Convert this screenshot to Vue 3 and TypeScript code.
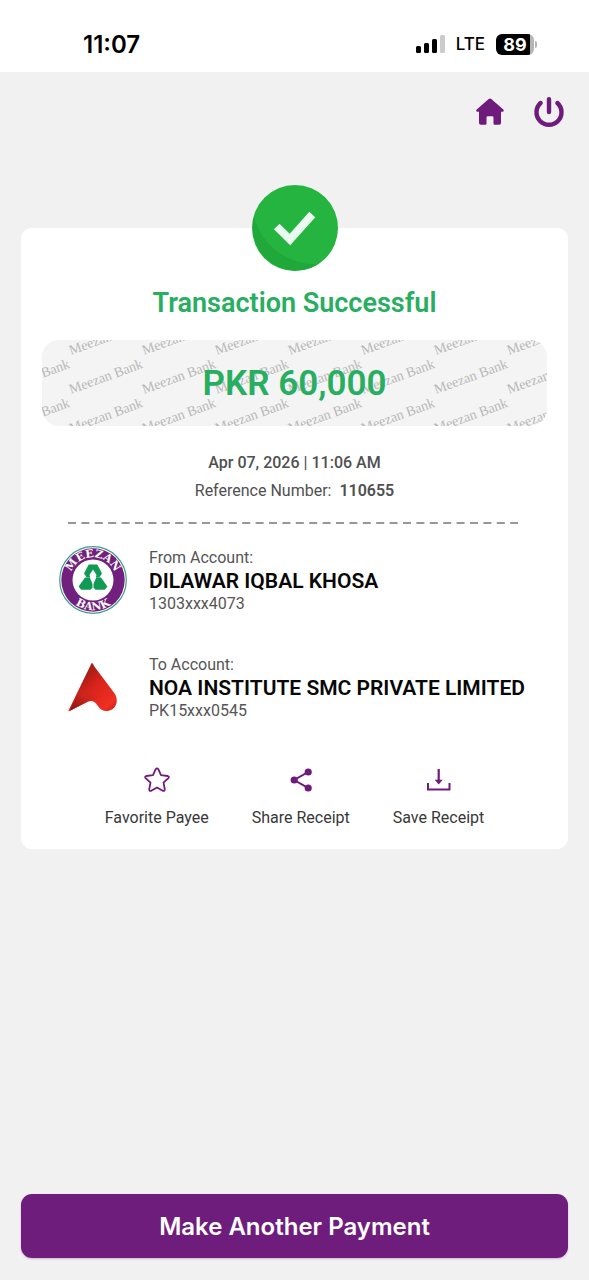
<script setup lang="ts">
interface Account {
  id: string
  label: string
  name: string
  number: string
}

const accounts: Account[] = [
  { id: 'from', label: 'From Account:', name: 'DILAWAR IQBAL KHOSA', number: '1303xxx4073' },
  { id: 'to', label: 'To Account:', name: 'NOA INSTITUTE SMC PRIVATE LIMITED', number: 'PK15xxx0545' },
]

// Watermark grid: repeated slanted captions, clipped by the banner
const marks: { x: number; y: number }[] = []
for (let row = 0; row < 4; row++) {
  for (let col = -1; col < 7; col++) {
    marks.push({ x: 29 + col * 73, y: 15 + row * 39 })
  }
}
</script>

<template>
  <div class="screen">
    <header class="status">
      <time class="clock">11:07</time>
      <div class="indicators">
        <svg class="signal" width="30" height="20" viewBox="0 0 30 20" aria-hidden="true">
          <rect x="1" y="12" width="5" height="7" rx="1.5" />
          <rect x="9" y="9" width="5" height="10" rx="1.5" />
          <rect x="17" y="5" width="5" height="14" rx="1.5" />
          <rect x="25" y="1" width="5" height="18" rx="1.5" fill="#cbcbcb" />
        </svg>
        <span class="network">LTE</span>
        <span class="battery"><span class="level">89</span><i class="cap"></i></span>
      </div>
    </header>

    <nav class="toolbar">
      <button class="tool" type="button" aria-label="Home">
        <svg width="30" height="30" viewBox="0 0 30 30" aria-hidden="true">
          <path d="M13.7 2.1q1.3-1.1 2.6 0L28.3 12.6q1.4 1.8-.9 2.2H26V26q0 1.8-1.8 1.8h-4.7q-1 0-1-1v-6.2q0-1.4-1.4-1.4h-4.2q-1.4 0-1.4 1.4v6.2q0 1-1 1H5.8Q4 27.8 4 26V14.8H2.6q-2.300-.4-.9-2.200z" fill="#6f1b7c" />
        </svg>
      </button>
      <button class="tool" type="button" aria-label="Log out">
        <svg width="30" height="30" viewBox="0 0 30 30" fill="none" stroke="#6f1b7c" stroke-width="4.4" stroke-linecap="round" aria-hidden="true">
          <path d="M15 2.2v12.8M6.6 6a12.5 12.5 0 1 0 16.8 0" />
        </svg>
      </button>
    </nav>

    <main class="card">
      <svg class="check" width="86" height="86" viewBox="0 0 86 86" aria-hidden="true">
        <circle cx="43" cy="43" r="43" fill="#25b43f" />
        <path d="M2 32A64 64 0 0 0 66 79.3A43 43 0 0 1 2 32z" fill="#20a83a" />
        <path d="M24.7 41.5 38 54.5 60.3 29.5" fill="none" stroke="#e9fbee" stroke-width="8" />
      </svg>

      <h1 class="title">Transaction Successful</h1>

      <div class="amount">
        <svg class="watermark" width="100%" height="100%" aria-hidden="true">
          <text v-for="(m, i) in marks" :key="i" :transform="`translate(${m.x} ${m.y}) rotate(-20)`">Meezan Bank</text>
        </svg>
        <strong class="sum">PKR 60,000</strong>
      </div>

      <p class="meta date">Apr 07, 2026 | 11:06 AM</p>
      <p class="meta">Reference Number: <b class="ref">110655</b></p>

      <svg class="divider" width="100%" height="2" aria-hidden="true">
        <line x1="0" y1="1" x2="100%" y2="1" stroke="#979797" stroke-width="2" stroke-dasharray="8 5.4" />
      </svg>

      <section v-for="account in accounts" :key="account.id" class="account">
        <svg v-if="account.id === 'from'" width="68" height="68" viewBox="0 0 68 68" aria-hidden="true">
          <circle cx="34" cy="34" r="33.3" fill="#fff" stroke="#3f9c86" stroke-width="1.2" />
          <circle cx="34" cy="34" r="31.7" fill="#71207d" />
          <circle cx="34" cy="34" r="20.5" fill="#fff" />
          <path id="seal-top" d="M12.3 41A22.8 22.8 0 1 1 55.7 41" fill="none" />
          <path id="seal-bottom" d="M3.8 34A30.2 30.2 0 0 0 64.2 34" fill="none" />
          <text class="seal"><textPath href="#seal-top" startOffset="50%">MEEZAN</textPath></text>
          <text class="seal"><textPath href="#seal-bottom" startOffset="50%">BANK</textPath></text>
          <g fill="#119a55">
            <path d="M29.7 18.5h8.6l4.7 9-2.8 4h-3.4L37.5 29 34 23.5 30.5 29l.7 2.5h-3.4L25 27.5z" />
            <path d="M26 31.5h4.8l2.7 6.5v3.2L31.7 43.8H22.2L19.6 40.5z" />
            <path d="M42 31.5h-4.8l-2.7 6.5v3.2L36.3 43.8H45.8L48.4 40.5z" />
          </g>
        </svg>
        <svg v-else width="68" height="68" viewBox="0 0 68 68" aria-hidden="true">
          <defs>
            <linearGradient id="wing" x1="0" y1="0" x2="1" y2="1">
              <stop offset="0.3" stop-color="#a81d16" />
              <stop offset="0.5" stop-color="#d9231b" />
              <stop offset="0.85" stop-color="#ef3023" />
              <stop offset="1" stop-color="#c51d18" />
            </linearGradient>
            <linearGradient id="fold" x1="0" y1="1" x2="1" y2="0">
              <stop offset="0" stop-color="#7e140f" />
              <stop offset="0.5" stop-color="#c7241b" stop-opacity="0.9" />
              <stop offset="1" stop-color="#e42a20" stop-opacity="0" />
            </linearGradient>
          </defs>
          <path d="M33 10Q34 10 35 13L56 41C60.5 49 56 58 47.5 58Q42 58 38.5 52.5Q35 46.5 29 48.5L10.5 58Q9 58.5 9.8 57L31.2 13Q32.3 10 33 10z" fill="url(#wing)" />
          <path d="M10.5 58 21.5 35Q34 42 45 43L29 48.5z" fill="url(#fold)" />
        </svg>
        <div class="party">
          <span class="label">{{ account.label }}</span>
          <strong class="name">{{ account.name }}</strong>
          <span class="label">{{ account.number }}</span>
        </div>
      </section>

      <div class="actions">
        <button class="action" type="button">
          <svg width="28" height="28" viewBox="0 0 28 28" fill="none" stroke="#6f1b7c" stroke-width="1.8" stroke-linejoin="round" aria-hidden="true">
            <path d="M12.7 3.2q1.3-1.8 2.6 0l2.7 6 6.7.8q1.9.6.7 2.1l-4.9 4.6 1.3 6.6q-.1 2-2 1.5L14 21.5l-5.8 3.3q-1.9.5-2-1.5l1.3-6.6-4.9-4.6q-1.2-1.5.7-2.1l6.7-.8z" />
          </svg>
          Favorite Payee
        </button>
        <button class="action" type="button">
          <svg width="28" height="28" viewBox="0 0 28 28" fill="#6f1b7c" aria-hidden="true">
            <path d="M21.5 5.8 7 14l14.5 8.2" fill="none" stroke="#6f1b7c" stroke-width="1.9" />
            <circle cx="21.2" cy="6" r="3.6" />
            <circle cx="7.2" cy="14" r="3.6" />
            <circle cx="21.2" cy="22" r="3.6" />
          </svg>
          Share Receipt
        </button>
        <button class="action" type="button">
          <svg width="28" height="28" viewBox="0 0 28 28" aria-hidden="true">
            <path d="M3 17v6.500h21.500v-6.500" fill="none" stroke="#6f1b7c" stroke-width="2" />
            <path d="M12.600 3h2.200v10.800h2.900L13.700 18.500l-4-4.700h2.900z" fill="#6f1b7c" />
          </svg>
          Save Receipt
        </button>
      </div>
    </main>

    <button class="primary" type="button">Make Another Payment</button>
  </div>
</template>

<style>
body {
  background: #f1f1f1;
}
</style>

<style scoped>
.screen {
  box-sizing: border-box;
  min-height: 100vh;
  display: flex;
  flex-direction: column;
  padding-bottom: 22px;
  background: #f1f1f1;
  font-family: Roboto, "Liberation Sans", sans-serif;
}

button {
  padding: 0;
  border: 0;
  background: none;
  font: inherit;
  cursor: pointer;
}

svg {
  display: block;
  flex: none;
}

.status {
  display: flex;
  align-items: center;
  justify-content: space-between;
  height: 56px;
  padding: 16px 52px 0 83px;
  background: #fff;
  color: #000;
  font-family: Inter, "Liberation Sans", sans-serif;
}

.clock {
  font-size: 24px;
  font-weight: 600;
}

.indicators {
  display: flex;
  align-items: center;
  gap: 11px;
}

.network {
  font-size: 17px;
  font-weight: 500;
}

.battery {
  display: flex;
  align-items: center;
  gap: 1px;
}

.level {
  width: 38px;
  height: 21px;
  border-radius: 6px;
  background: linear-gradient(90deg, #000 34px, #b5b5b5 34px);
  color: #fff;
  font-size: 18px;
  font-weight: 700;
  line-height: 21px;
  text-align: center;
}

.cap {
  width: 2px;
  height: 7px;
  border-radius: 0 2px 2px 0;
  background: #b5b5b5;
}

.toolbar {
  display: flex;
  justify-content: flex-end;
  gap: 29px;
  padding: 25px 25px 0;
}

.card {
  display: flex;
  flex-direction: column;
  align-items: center;
  margin: 101px 21px 0;
  padding: 0 21px 21px;
  border-radius: 11px;
  background: #fff;
}

.check {
  margin-top: -43px;
}

.title {
  margin: 15px 0 20px;
  color: #27ae60;
  font-size: 27px;
  font-weight: 600;
  line-height: 34px;
}

.amount {
  position: relative;
  display: grid;
  place-items: center;
  align-self: stretch;
  height: 86px;
  border-radius: 17px;
  background: #f4f4f4;
  overflow: hidden;
}

.watermark {
  position: absolute;
  inset: 0;
  fill: #b8b8b8;
  font-family: "Liberation Serif", serif;
  font-size: 14px;
}

.sum {
  position: relative;
  color: #27ae60;
  font-size: 35px;
  font-weight: 600;
}

.meta {
  margin: 0;
  color: #505050;
  font-size: 16px;
  line-height: 28px;
}

.date {
  margin-top: 23px;
  font-weight: 500;
}

.ref {
  margin-left: 4px;
  font-weight: 600;
}

.divider {
  width: calc(100% - 55px);
  margin: 17px 4px 21px 0;
}

.account {
  display: flex;
  align-items: center;
  align-self: stretch;
  gap: 22px;
  margin-bottom: 37px;
  padding-left: 17px;
}

.party {
  display: flex;
  flex-direction: column;
  padding-top: 2px;
  white-space: nowrap;
}

.label {
  color: #555;
  font-size: 16px;
  line-height: 22px;
}

.name {
  color: #080808;
  font-size: 21px;
  font-weight: 600;
  line-height: 24px;
}

.seal {
  fill: #fff;
  font-family: "DejaVu Serif", serif;
  font-size: 11px;
  font-weight: 700;
  text-anchor: middle;
}

.actions {
  display: flex;
  justify-content: center;
  gap: 43px;
  margin-top: 7px;
}

.action {
  display: flex;
  flex-direction: column;
  align-items: center;
  gap: 14px;
  color: #383838;
  font-size: 16px;
  line-height: 20px;
}

.primary {
  height: 64px;
  margin: auto 21px 0;
  border-radius: 11px;
  background: #6f1d7c;
  box-shadow: 0 1px 2px #cfb4d4;
  color: #fff;
  font-family: Inter, "Liberation Sans", sans-serif;
  font-size: 24px;
  font-weight: 600;
}
</style>
